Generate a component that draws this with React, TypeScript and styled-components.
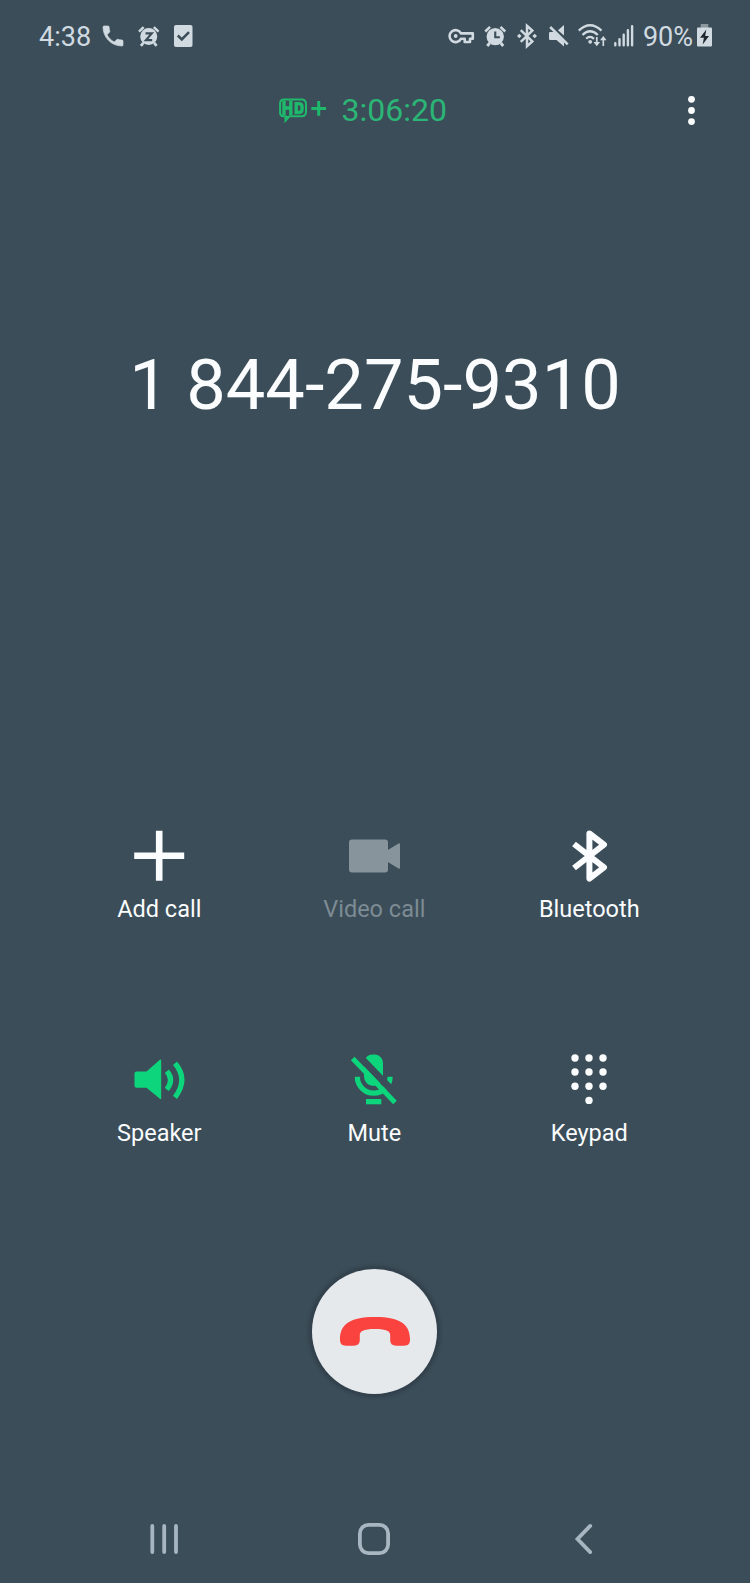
import React from 'react';
import styled, { createGlobalStyle } from 'styled-components';

const colors = {
  background: '#3b4d58',
  status: '#d0dae0',
  timer: '#2bb576',
  hd: '#1fb96c',
  active: '#0cd57b',
  white: '#fafcfd',
  disabled: '#87949b',
  disabledText: '#7d8b94',
  nav: '#a7b6c0',
  hangup: '#fa423f',
};

const GlobalStyle = createGlobalStyle`
  * { box-sizing: border-box; }
  body { margin: 0; background: ${colors.background}; }
`;

const Screen = styled.main`
  width: 750px;
  height: 1583px;
  display: flex;
  flex-direction: column;
  overflow: hidden;
  background: ${colors.background};
  color: ${colors.white};
  font-family: Roboto, 'Liberation Sans', sans-serif;
`;

const StatusBar = styled.header`
  height: 73px;
  flex: none;
  display: flex;
  align-items: center;
  justify-content: space-between;
  padding: 0 38px 0 39px;
  color: ${colors.status};
`;

const StatusGroup = styled.div`
  display: flex;
  align-items: center;
`;

const StatusIcons = styled.div`
  display: flex;
  align-items: center;
  padding-bottom: 2px;
`;

const StatusText = styled.span<{ $gap?: number }>`
  margin-left: ${(p) => p.$gap ?? 0}px;
  font-size: 27px;
  line-height: 32px;
  white-space: nowrap;
`;

const Glyph = styled.svg<{ $gap?: number }>`
  display: block;
  flex: none;
  overflow: visible;
  margin-left: ${(p) => p.$gap ?? 0}px;
`;

const CallHeader = styled.section`
  height: 74px;
  flex: none;
  display: flex;
  align-items: center;
  justify-content: space-between;
  padding: 0 55px 0 279px;
`;

const CallTimer = styled.div`
  display: flex;
  align-items: center;
  gap: 14.5px;
  color: ${colors.timer};
  font-size: 32px;
  line-height: 38px;
`;

const IconButton = styled.button<{ $endGap?: number }>`
  display: flex;
  margin: 0 ${(p) => p.$endGap ?? 0}px 0 0;
  padding: 0;
  border: 0;
  background: none;
  color: inherit;
`;

const PhoneNumber = styled.h1`
  margin: 198px 0 0;
  font-size: 70.4px;
  font-weight: 400;
  line-height: 80px;
  text-align: center;
  white-space: nowrap;
`;

const Actions = styled.section`
  display: grid;
  grid-template-columns: repeat(3, 215px);
  row-gap: 131px;
  margin: 405px 0 0 51.8px;
`;

type Tone = 'normal' | 'active' | 'disabled';

const iconTone = { normal: colors.white, active: colors.active, disabled: colors.disabled };

const ActionButton = styled.button<{ $tone: Tone }>`
  display: flex;
  flex-direction: column;
  align-items: center;
  gap: 15px;
  padding: 0;
  border: 0;
  background: none;
  font-family: inherit;
  color: ${(p) => iconTone[p.$tone]};
`;

const IconSlot = styled.span`
  height: 50px;
  display: flex;
  align-items: center;
`;

const ActionLabel = styled.span<{ $tone: Tone }>`
  font-size: 23.5px;
  line-height: 28px;
  color: ${(p) => (p.$tone === 'disabled' ? colors.disabledText : colors.white)};
`;

const EndCall = styled.button`
  width: 125px;
  height: 125px;
  flex: none;
  margin: 122px 0 0 312px;
  display: flex;
  align-items: center;
  justify-content: center;
  padding: 0 0 1px;
  border: 0;
  border-radius: 50%;
  background: #e6e9eb;
  box-shadow: 0 0 3px 3.5px rgba(42, 54, 65, 0.5);
  color: ${colors.hangup};
`;

const NavBar = styled.nav`
  height: 88px;
  flex: none;
  margin-top: auto;
  display: flex;
  align-items: center;
  justify-content: space-between;
  padding: 0 158px 0 150px;
  color: ${colors.nav};
`;

const HandsetIcon = () => (
  <Glyph $gap={12} width="20" height="20" viewBox="3 3 18 18" fill="currentColor">
    <path d="M6.600 10.800c1.400 2.800 3.800 5.100 6.600 6.600l2.200-2.200c.3-.3.7-.4 1-.2 1.100.4 2.300.6 3.600.6.6 0 1 .4 1 1V20c0 .6-.4 1-1 1C10.600 21 3 13.400 3 4c0-.6.4-1 1-1h3.500c.6 0 1 .4 1 1 0 1.300.2 2.500.6 3.600.1.3 0 .7-.2 1z" stroke="currentColor" strokeWidth=".6" />
  </Glyph>
);

const AlarmBody = () => (
  <>
    <path d="M1 6.500 5.800 1.800M16.200 1.800 21 6.500" stroke="currentColor" strokeWidth="2.500" fill="none" />
    <path d="M5.500 18 3 21M16.500 18 19 21" stroke="currentColor" strokeWidth="2.800" fill="none" />
    <circle cx="11" cy="11.600" r="8.700" fill="currentColor" />
  </>
);

const SnoozeIcon = () => (
  <Glyph $gap={14.5} width="21.500" height="22" viewBox="0 0 22 22">
    <AlarmBody />
    <path d="M7.700 8.300h6.300l-5.800 6.800h6.300" stroke={colors.background} strokeWidth="2.300" fill="none" />
  </Glyph>
);

const TaskIcon = () => (
  <Glyph $gap={14.5} width="18.500" height="22" viewBox="0 0 18.500 22">
    <rect width="18.500" height="22" rx="2" fill="currentColor" />
    <path d="m3.800 10.500 4 4 7.200-7.300" stroke={colors.background} strokeWidth="2.500" fill="none" />
  </Glyph>
);

const KeyIcon = () => (
  <Glyph width="26.500" height="16" viewBox="0 0 26.500 16" fill="none" stroke="currentColor">
    <path
      d="M12.900 5.400A6 6 0 1 0 12.900 10.800H16.700V14H22V10.800H24.800V5.400Z"
      strokeWidth="2.600"
      strokeLinejoin="round"
    />
    <circle cx="7.700" cy="8" r="1.900" fill="currentColor" stroke="none" />
  </Glyph>
);

const AlarmIcon = () => (
  <Glyph $gap={9} width="22.500" height="22" viewBox="0 0 22 22">
    <AlarmBody />
    <path d="M11 6.500v5.800h4.600" stroke={colors.background} strokeWidth="2.100" fill="none" />
  </Glyph>
);

const BluetoothStatusIcon = () => (
  <Glyph $gap={10.5} width="20" height="24" viewBox="0 0 20 24" fill="none" stroke="currentColor">
    <path d="m3.800 6.200 11.500 11.200-5.300 4.700V1.900l5.300 4.700L3.800 17.800" strokeWidth="2.500" />
    <path d="m2.300 9.700 2.300 2.300-2.300 2.300L0 12ZM17.700 9.700 20 12l-2.300 2.300-2.300-2.300Z" fill="currentColor" stroke="none" />
  </Glyph>
);

const MutedIcon = () => (
  <Glyph $gap={12} width="20" height="22" viewBox="0 0 20 22" fill="currentColor">
    <path d="M0 8.200Q0 7 1.200 7H5l10 10v4.500L7.500 15H1.200Q0 15 0 13.800ZM9 5.200 15 0v10.600Z" />
    <path d="m1.200 2 17.500 17.300" stroke="currentColor" strokeWidth="2.500" />
  </Glyph>
);

const WifiIcon = () => (
  <Glyph $gap={9} width="29" height="23" viewBox="0 0 29 23" fill="none" stroke="currentColor" strokeWidth="2.300">
    <path d="M.8 6.600Q12 -4 23.500 6.600M4.500 11Q12 3.600 19.800 11M8.200 14.800Q12 11 16 14.800" />
    <circle cx="12.200" cy="17.800" r="1.900" fill="currentColor" stroke="none" />
    <path d="M18.800 13v7M25.300 22v-7" strokeWidth="1.700" />
    <path d="M15.500 18h6.600l-3.300 4.200ZM22 16.300h6.600l-3.300-4.200Z" fill="currentColor" stroke="none" />
  </Glyph>
);

const SignalIcon = () => (
  <Glyph $gap={7.5} width="19.500" height="21.500" viewBox="0 0 19.500 21.500" stroke="currentColor" strokeWidth="2.400" strokeLinecap="round">
    <path d="M1.300 18.300v2M5.500 14.300v6M9.700 9.800v10.500M13.900 5.300v15M18.100 1.200v19.100" />
  </Glyph>
);

const BatteryIcon = () => (
  <Glyph $gap={4} width="15" height="22.500" viewBox="0 1 15 22.500">
    <rect x="3.700" width="7.600" height="4" fill="#8c989f" />
    <rect y="3.500" width="15" height="19" rx="1" fill="currentColor" />
    <path d="M9.300 5.600 3 13.800h3.900L5.700 20.500 12 12H8.200Z" fill="#20262b" />
  </Glyph>
);

const HdPlusIcon = () => (
  <Glyph width="48" height="26" viewBox="0 -1.500 48 26" fill="none" stroke={colors.hd}>
    <path
      d="M5 1.100H22.500Q27 1.100 27 5.600V13.200Q27 17.700 22.500 17.700H10.300L6.500 22V17.700H4.500Q1.100 17.700 1.100 14.300V5Q1.100 1.100 5 1.100Z"
      strokeWidth="2"
    />
    <path d="M6 17.500h5.500L6.500 23.800Z" fill={colors.hd} stroke="none" />
    <path d="M5 2v14.500M11.800 2v14.500M4.800 9.500H12" strokeWidth="3.300" />
    <path d="M17.200 5.200h2.600q3.300 0 3.300 3.200v2.400q0 3.200-3.300 3.200h-2.600Z" strokeWidth="3.300" />
    <path d="M39.700 2.500v14.800M32.300 10h14.800" strokeWidth="3" />
  </Glyph>
);

const MoreIcon = () => (
  <Glyph width="7" height="30" viewBox="0 -.3 7 30" fill="currentColor">
    <circle cx="3.500" cy="4" r="3.400" />
    <circle cx="3.500" cy="15.200" r="3.400" />
    <circle cx="3.500" cy="26.300" r="3.400" />
  </Glyph>
);

const AddIcon = () => (
  <Glyph width="50" height="50" viewBox="-.2 -.8 50 50">
    <path d="M25 0v50M0 25h50" stroke="currentColor" strokeWidth="6.600" />
  </Glyph>
);

const VideoIcon = () => (
  <Glyph width="51" height="33" viewBox="0 -.5 51 33" fill="currentColor">
    <rect width="39" height="33" rx="3" />
    <path d="M38 11 49.500 4q1.500-.8 1.500 1v23q0 1.800-1.500 1L38 22Z" />
  </Glyph>
);

const BluetoothIcon = () => (
  <Glyph width="35" height="51" viewBox="0 -.5 35 51" fill="none" stroke="currentColor" strokeWidth="6" strokeLinejoin="round">
    <path d="M2 13.500 32 36.800 17.400 48.100V3L32 14.200 2 37.500" />
  </Glyph>
);

const SpeakerIcon = () => (
  <Glyph width="50" height="41" viewBox="-.5 0 50 41" fill="none" stroke="currentColor" strokeWidth="5.200">
    <path d="M2 12.500h10L25.400.8q1.300-.9 1.300.6v37.800q0 1.500-1.300.6L12 28.800H2Q0 28.800 0 26.800V14.500q0-2 2-2Z" fill="currentColor" stroke="none" />
    <path d="M32.300 12.200Q39.900 20.500 32.300 30.500M40.500 4.300Q54.200 20.500 40.500 38.300" />
  </Glyph>
);

const MicOffIcon = () => (
  <Glyph width="46" height="51" viewBox="0 0 46 51">
    <mask id="mic-gap" maskUnits="userSpaceOnUse" x="-10" y="-20" width="70" height="80">
      <rect x="-10" y="-20" width="70" height="80" fill="#fff" />
      <path d="m-3.800-10.200 52 54" stroke="#000" strokeWidth="7" />
    </mask>
    <g mask="url(#mic-gap)">
      <path d="M13 9a8.500 8.500 0 0 1 8.500-8.500h2A8.500 8.500 0 0 1 32 9v13.500a9.500 9.500 0 0 1-19 0Z" fill="currentColor" />
      <path d="M6.300 22.700a16.400 16.400 0 0 0 32.800 0" fill="none" stroke="currentColor" strokeWidth="5.200" />
    </g>
    <path d="m1.700 4.500 42.300 44" stroke="currentColor" strokeWidth="5" />
    <path d="M15 45h15.300v5.300H15Z" fill="currentColor" />
  </Glyph>
);

const keypadDots = [
  [4, 4], [18, 4], [32, 4],
  [4, 18], [18, 18], [32, 18],
  [4, 32.3], [18, 32.3], [32, 32.3],
  [18, 46.4],
];

const KeypadIcon = () => (
  <Glyph width="36" height="50" viewBox="0 0 36 50" fill="currentColor">
    {keypadDots.map(([x, y]) => (
      <circle key={`${x}-${y}`} cx={x} cy={y} r="3.700" />
    ))}
  </Glyph>
);

const HangUpIcon = () => (
  <Glyph width="70" height="29" viewBox="0 0 70 29" fill="currentColor">
    <path d="M0 22.500C0 8 9 0 35 0S70 8 70 22.500c0 4.500-2 6.200-6 6.200h-7.500c-4.500 0-6.300-2-6.300-6.200v-4.300C50.200 14.500 47 12 35 12s-15.200 2.500-15.200 6.200v4.300c0 4.200-1.800 6.200-6.300 6.200H6c-4 0-6-1.700-6-6.200Z" />
  </Glyph>
);

const actions: { label: string; tone: Tone; Icon: React.FC }[] = [
  { label: 'Add call', tone: 'normal', Icon: AddIcon },
  { label: 'Video call', tone: 'disabled', Icon: VideoIcon },
  { label: 'Bluetooth', tone: 'normal', Icon: BluetoothIcon },
  { label: 'Speaker', tone: 'active', Icon: SpeakerIcon },
  { label: 'Mute', tone: 'active', Icon: MicOffIcon },
  { label: 'Keypad', tone: 'normal', Icon: KeypadIcon },
];

export default function App() {
  return (
    <Screen>
      <GlobalStyle />
      <StatusBar>
        <StatusGroup>
          <StatusText>4:38</StatusText>
          <StatusIcons>
            <HandsetIcon />
            <SnoozeIcon />
            <TaskIcon />
          </StatusIcons>
        </StatusGroup>
        <StatusGroup>
          <StatusIcons>
            <KeyIcon />
            <AlarmIcon />
            <BluetoothStatusIcon />
            <MutedIcon />
            <WifiIcon />
            <SignalIcon />
          </StatusIcons>
          <StatusText $gap={9}>90%</StatusText>
          <BatteryIcon />
        </StatusGroup>
      </StatusBar>

      <CallHeader>
        <CallTimer>
          <HdPlusIcon />
          <span>3:06:20</span>
        </CallTimer>
        <IconButton aria-label="More options">
          <MoreIcon />
        </IconButton>
      </CallHeader>

      <PhoneNumber>1 844-275-9310</PhoneNumber>

      <Actions>
        {actions.map(({ label, tone, Icon }) => (
          <ActionButton key={label} $tone={tone}>
            <IconSlot>
              <Icon />
            </IconSlot>
            <ActionLabel $tone={tone}>{label}</ActionLabel>
          </ActionButton>
        ))}
      </Actions>

      <EndCall aria-label="End call">
        <HangUpIcon />
      </EndCall>

      <NavBar>
        <IconButton aria-label="Recent apps">
          <Glyph width="28" height="30" viewBox="0 0 28 30" stroke="currentColor" strokeWidth="3.800" strokeLinecap="round">
            <path d="M2.300 2v26M14.200 2v26M26 2v26" />
          </Glyph>
        </IconButton>
        <IconButton aria-label="Home" $endGap={4.5}>
          <Glyph width="32" height="32" viewBox="0 0 32 32" fill="none" stroke="currentColor" strokeWidth="3.800">
            <rect x="1.900" y="1.900" width="28.200" height="28.200" rx="8.500" />
          </Glyph>
        </IconButton>
        <IconButton aria-label="Back">
          <Glyph width="17" height="30" viewBox="0 0 17 30" fill="none" stroke="currentColor" strokeWidth="3.800" strokeLinecap="round">
            <path d="M15.200 1.900 2.500 15 15.200 28.100" />
          </Glyph>
        </IconButton>
      </NavBar>
    </Screen>
  );
}
